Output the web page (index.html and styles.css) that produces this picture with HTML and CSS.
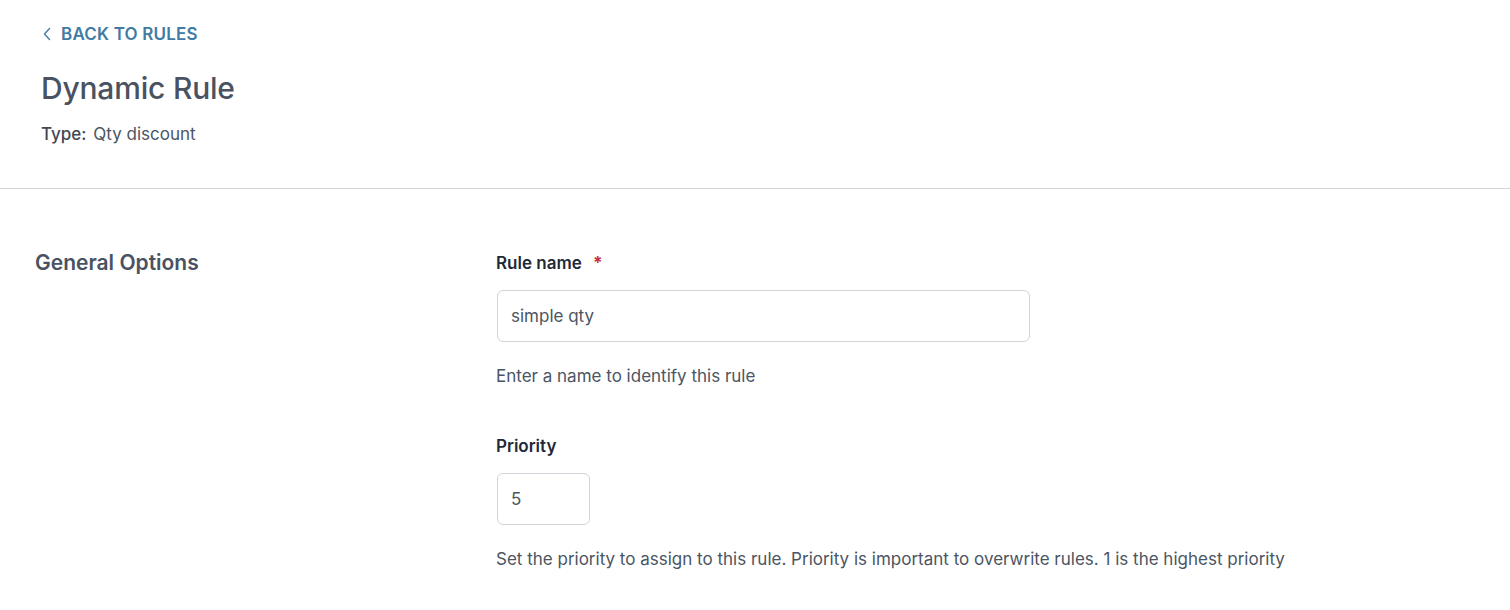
FILE: index.html
```html
<!DOCTYPE html>
<html>
<head>
<meta charset="utf-8">
<link rel="stylesheet" href="styles.css">
</head>
<body>
<header class="page-header">
  <a class="back-link" href="#">
    <svg class="chev" width="10" height="14" viewBox="0 0 10 14"><path d="M7.5 1.5 L2.5 7 L7.5 12.5" fill="none" stroke="#4a80a8" stroke-width="1.5" stroke-linecap="round" stroke-linejoin="round"/></svg>
    <span>BACK TO RULES</span>
  </a>
  <h1 class="title">Dynamic Rule</h1>
  <div class="type"><span class="type-label">Type:</span> Qty discount</div>
</header>
<section class="options">
  <h2 class="section-title">General Options</h2>
  <div class="fields">
    <div class="field">
      <label class="label">Rule name <span class="req">*</span></label>
      <div class="input wide">simple qty</div>
      <p class="help">Enter a name to identify this rule</p>
    </div>
    <div class="field">
      <label class="label">Priority</label>
      <div class="input narrow">5</div>
      <p class="help">Set the priority to assign to this rule. Priority is important to overwrite rules. 1 is the highest priority</p>
    </div>
  </div>
</section>
</body>
</html>
```
FILE: styles.css
```css
* { box-sizing: border-box; }
html, body { margin: 0; padding: 0; background: #fff; }
body { font-family: Inter, "Noto Sans", sans-serif; color: #4b5563; width: 1510px; height: 610px; overflow: hidden; }
.page-header { padding: 23px 0 0 41px; height: 189px; border-bottom: 1px solid #d6d6d6; }
.back-link { display: flex; align-items: center; gap: 9px; text-decoration: none; color: #3f7ba3; font-weight: 600; font-size: 17px; letter-spacing: 0.2px; height: 22px; margin-left: 1px; }
.title { margin: 25px 0 0 0; font-size: 30px; font-weight: 500; color: #4a5262; line-height: 36px; letter-spacing: -0.2px; }
.type { margin-top: 18px; font-size: 17px; color: #4b5563; line-height: 20px; }
.type-label { font-weight: 500; color: #3f4756; margin-right: 2px; }
.options { display: flex; padding: 62px 0 0 35px; }
.section-title { width: 461px; margin: 0; font-size: 21px; font-weight: 600; color: #4a5262; line-height: 24px; }
.fields { display: flex; flex-direction: column; gap: 48px; }
.field { display: flex; flex-direction: column; }
.label { font-size: 17px; font-weight: 600; color: #1f2937; line-height: 20px; margin-top: 2px; }
.req { color: #c62f3d; margin-left: 7px; font-weight: 700; }
.input { margin-top: 17px; height: 52px; border: 1px solid #d0d5db; border-radius: 6px; display: flex; align-items: center; padding-left: 13px; font-size: 17px; color: #4b5563; margin-left: 1px; }
.wide { width: 533px; }
.narrow { width: 93px; padding-left: 13px; }
.help { margin: 24px 0 0 0; font-size: 17px; line-height: 20px; color: #4b5563; }
```
